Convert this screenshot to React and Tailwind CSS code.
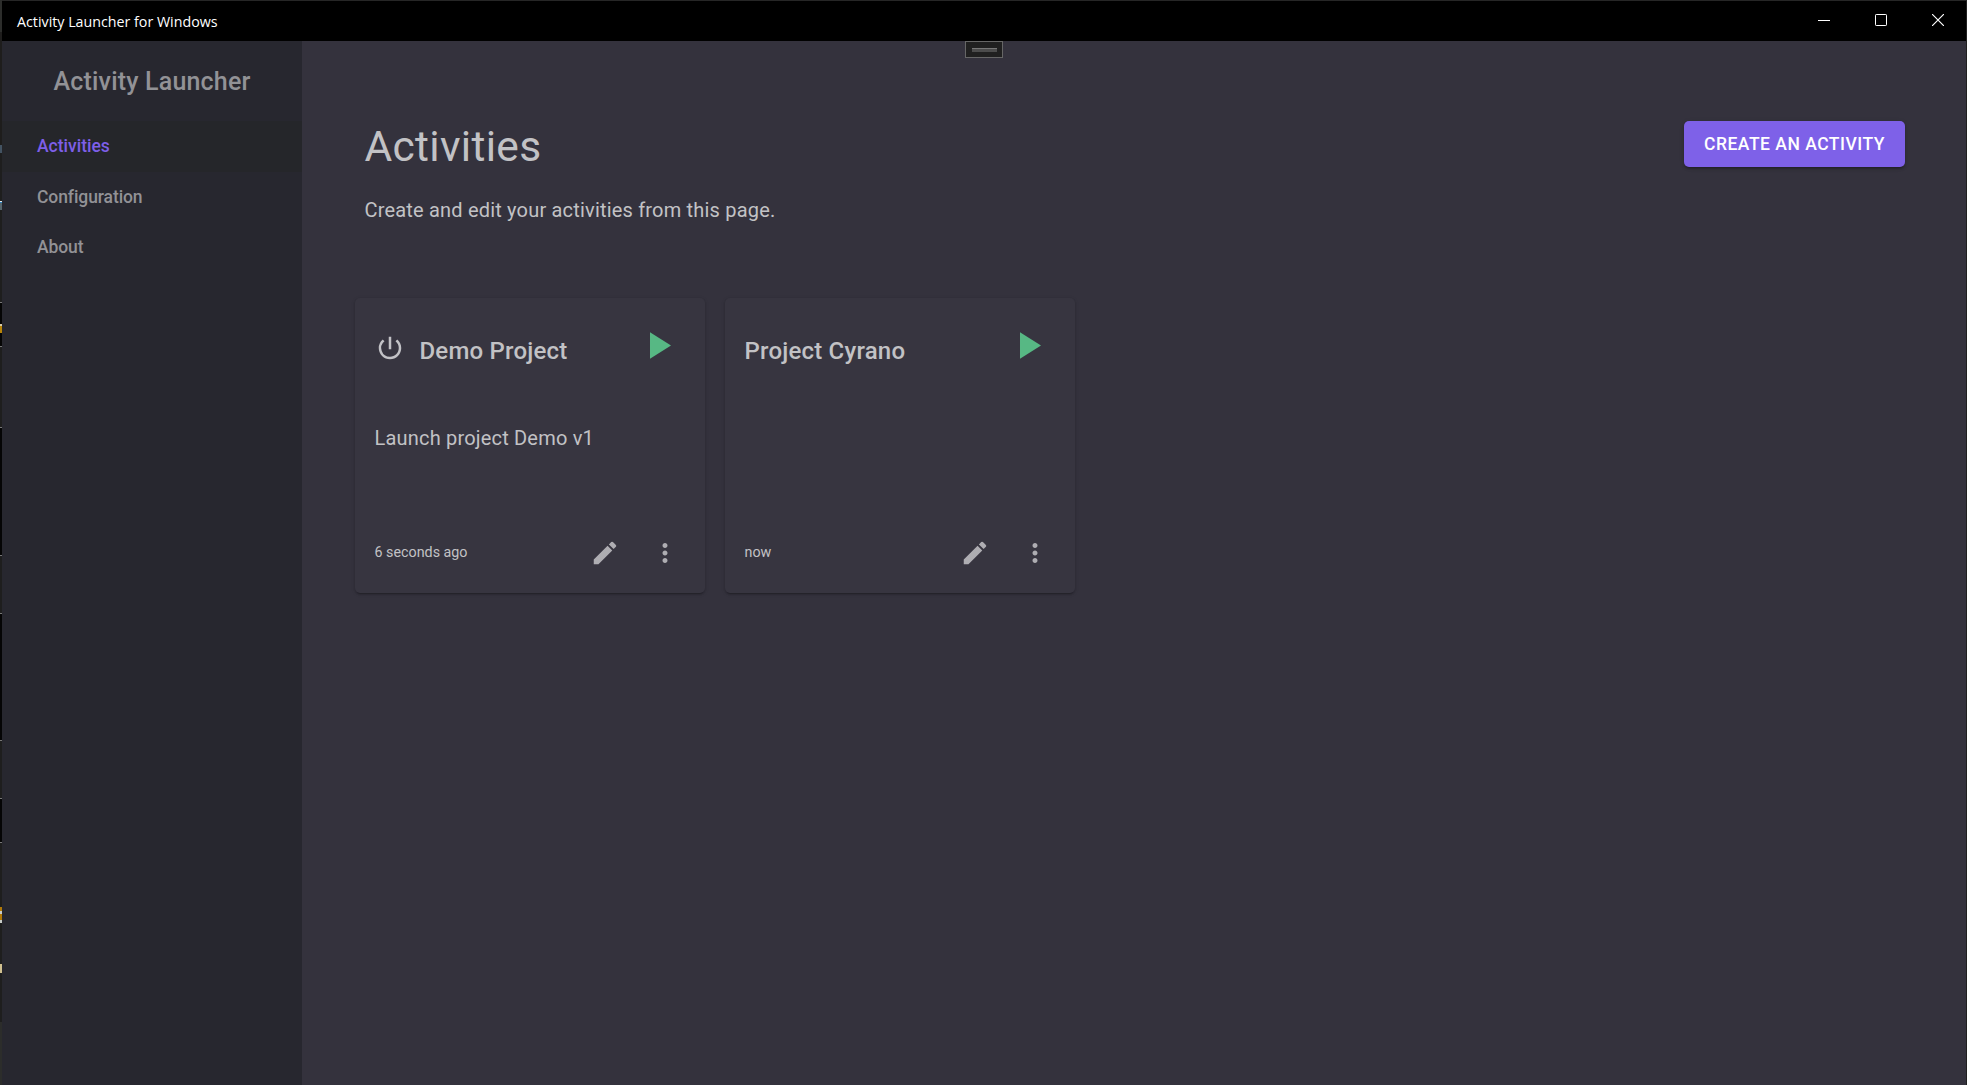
import React from "react";
import { MdPowerSettingsNew, MdEdit, MdMoreVert } from "react-icons/md";

function Card({ title, power, text, time }) {
  return (
    <article className="flex h-[295px] w-[350px] flex-col rounded-[5px] bg-[#373540] shadow-[0_3px_2px_-2px_rgba(0,0,0,0.2),0_1px_2px_rgba(0,0,0,0.14),0_1px_4px_rgba(0,0,0,0.12)]">
      <header className="flex h-[100px] items-start pl-[19.5px] pr-[34px] pt-[34px]">
        {power && <MdPowerSettingsNew className="mr-[15px] mt-px h-[30px] w-[30px] shrink-0 text-[#c2c2c6]" />}
        <h2 className="whitespace-nowrap text-[24px] font-medium leading-[38px] tracking-[0.0085em]">{title}</h2>
        <svg className="ml-auto h-[27px] w-[21px]" viewBox="0 0 21 27">
          <path d="M0 .3 21 13.5 0 26.7Z" fill="#57b884" />
        </svg>
      </header>
      <p className="h-[130px] pl-[19.5px] pt-[25px] text-[20px] leading-[30px] tracking-[0.00938em]">{text}</p>
      <footer className="flex h-[50px] items-center pl-[19.5px] pr-[25px]">
        <span className="mb-[2px] text-[14.3px] leading-[24px]">{time}</span>
        <MdEdit className="ml-auto h-[30px] w-[30px] text-[#aeadb2]" />
        <MdMoreVert className="ml-[30px] h-[30px] w-[30px] text-[#aeadb2]" />
      </footer>
    </article>
  );
}

// Sliver of the desktop visible along the window's left edge.
const EDGE = [
  [32, "bg-[#2c2d2b]"], [113, "bg-[#1e1d1c]"], [8, "bg-[#435362]"], [48, "bg-[#1e1e1e]"],
  [1, "bg-[#e8eef2]"], [1, "bg-[#2a82c0]"], [7, "bg-[#56666e]"], [92, "bg-[#1e1e1e]"],
  [1, "bg-[#777777]"], [21, "bg-[#050505]"], [2, "bg-[#d8cba8]"], [7, "bg-[#b88408]"],
  [13, "bg-[#050505]"], [1, "bg-[#777777]"], [80, "bg-[#1e1e1e]"], [1, "bg-[#777777]"],
  [127, "bg-[#050505]"], [1, "bg-[#777777]"], [57, "bg-[#1e1e1e]"], [1, "bg-[#777777]"],
  [126, "bg-[#050505]"], [1, "bg-[#777777]"], [57, "bg-[#1e1e1e]"], [1, "bg-[#777777]"],
  [43, "bg-[#050505]"], [1, "bg-[#777777]"], [64, "bg-[#1e1e1e]"], [4, "bg-[#b07808]"],
  [3, "bg-[#c8ccc8]"], [6, "bg-[#b07808]"], [3, "bg-[#c8ccc8]"], [41, "bg-[#1e1e1e]"],
  [9, "bg-[#d0c090]"], [49, "bg-[#1e1e1e]"], [64, "bg-[#2c2d2b]"],
];

export default function App() {
  return (
    <div className="flex h-[1085px] w-[1967px] overflow-hidden bg-[#34323d]">
      <div className="flex w-[2px] shrink-0 flex-col">
        {EDGE.map(([height, color], i) => (
          <div key={i} className={`shrink-0 ${color}`} style={{ height }} />
        ))}
      </div>
      <div className="flex min-w-0 flex-1 flex-col border-r border-t border-r-[#202020] border-t-[#262626] font-['Roboto',sans-serif] text-[#c2c2c5]">
        <div className="flex h-10 shrink-0 items-center bg-black pl-[15px] pr-[22px] text-white">
          <span className="mt-px font-['Open_Sans',sans-serif] text-[14.25px]">Activity Launcher for Windows</span>
          <div className="mb-[2px] ml-auto flex gap-[45px]">
            <svg width="12" height="12" viewBox="0 0 12 12"><path d="M0 6.5h12" stroke="#fff" /></svg>
            <svg width="12" height="12" viewBox="0 0 12 12"><rect x=".5" y=".5" width="11" height="11" rx=".7" fill="none" stroke="#fff" /></svg>
            <svg width="12" height="12" viewBox="0 0 12 12"><path d="m0 0 12 12M12 0 0 12" stroke="#fff" strokeWidth="1.15" /></svg>
          </div>
        </div>
        <div className="relative flex min-h-0 flex-1">
          <div className="absolute left-[963px] top-0 flex h-[17px] w-[38px] items-center justify-center border border-[#666] bg-[#202020]">
            <div className="h-1 w-[25px] border-t border-[#777] bg-[#4c4c4c]" />
          </div>
          <aside className="w-[300px] shrink-0 bg-[#27272f] text-[#929296]">
            <div className="flex h-20 items-center justify-center pt-[2px] text-[25px] font-medium tracking-[0.0075em]">Activity Launcher</div>
            <nav className="text-[17.5px] font-medium leading-[50px] tracking-[-0.005em]">
              <div className="h-[51px] bg-[#25262a] pl-[35px] tracking-normal text-[#7e5fe8]">Activities</div>
              <div className="h-[50px] pl-[35px]">Configuration</div>
              <div className="h-[50px] pl-[35px]">About</div>
            </nav>
          </aside>
          <main className="flex-1 pl-[53px] pt-20">
            <div className="flex items-start justify-between pl-[9.5px] pr-[61px]">
              <div>
                <h1 className="text-[42.5px] leading-[51px] tracking-[0.00735em]">Activities</h1>
                <p className="mt-[23px] text-[20px] leading-[30px] tracking-[0.00938em]">Create and edit your activities from this page.</p>
              </div>
              <button className="h-[46px] w-[221px] whitespace-nowrap rounded-[5px] bg-[#7e61e8] text-[17.5px] font-medium tracking-[0.02857em] text-white shadow-[0_3px_2px_-2px_rgba(0,0,0,0.2),0_2px_3px_rgba(0,0,0,0.14),0_1px_5px_rgba(0,0,0,0.12)]">CREATE AN ACTIVITY</button>
            </div>
            <section className="mt-[73px] flex gap-5">
              <Card title="Demo Project" power text="Launch project Demo v1" time="6 seconds ago" />
              <Card title="Project Cyrano" time="now" />
            </section>
          </main>
        </div>
      </div>
    </div>
  );
}
